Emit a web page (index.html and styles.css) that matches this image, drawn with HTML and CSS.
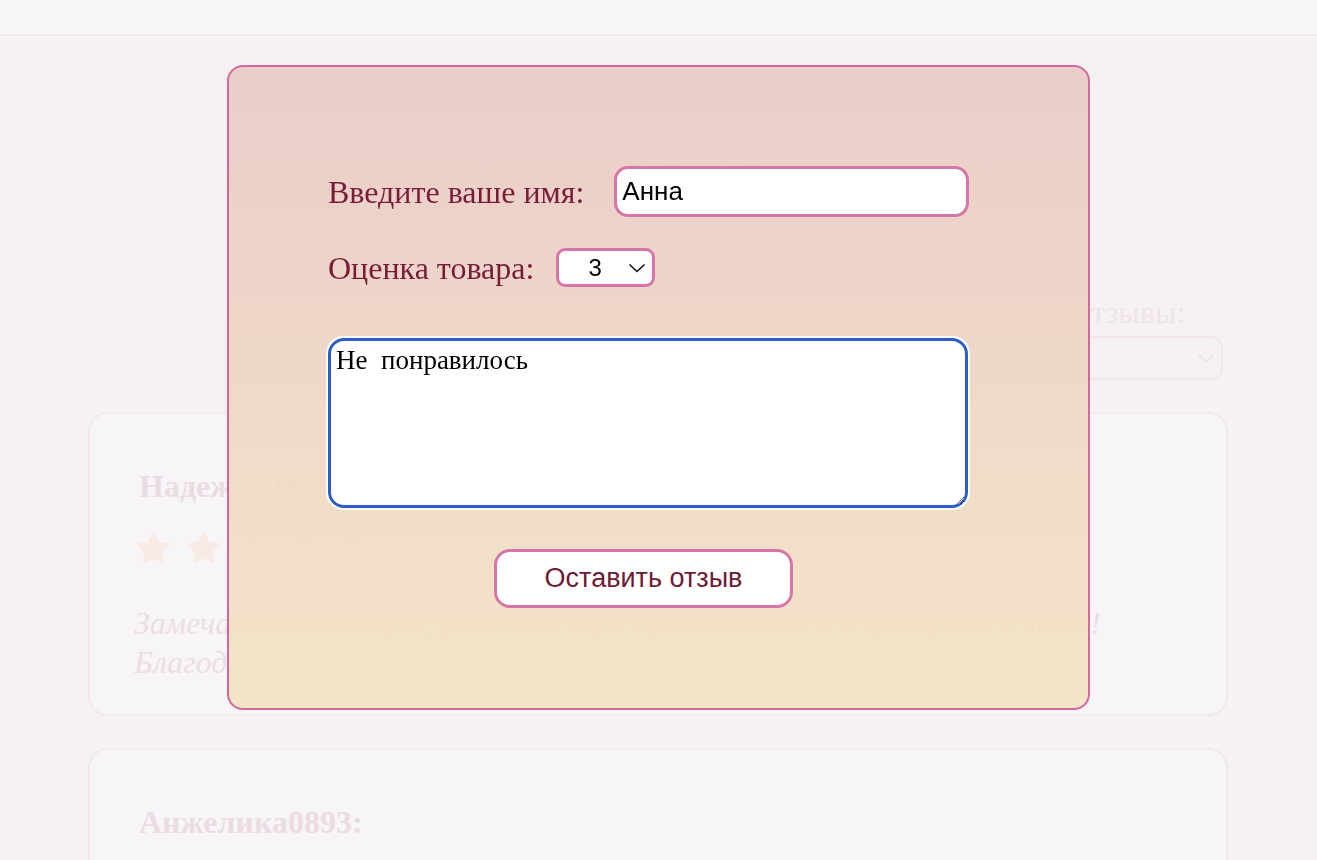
FILE: index.html
```html
<!DOCTYPE html>
<html lang="ru">
<head>
<meta charset="utf-8">
<title>Отзывы</title>
<link rel="stylesheet" href="styles.css">
</head>
<body>
<header class="topbar"></header>
<main class="page">
  <h1 class="page-title">Отзывы</h1>
  <div class="sort">
    <div class="sort-label">Сортировать отзывы:</div>
    <div class="sort-select">
      <span></span>
      <svg class="chev" width="18" height="10" viewBox="0 0 18 10"><path d="M1 1l8 8 8-8" fill="none" stroke="#f0e0e6" stroke-width="1.6"/></svg>
    </div>
  </div>
  <section class="reviews">
    <article class="card">
      <h3 class="card-name">Надежда Иванова:</h3>
      <div class="stars">
        <svg class="star" viewBox="0 0 24 24"><path class="fill" d="M12 1.5l3.2 6.6 7.2 1-5.2 5 1.3 7.2L12 17.9l-6.5 3.4 1.3-7.2-5.2-5 7.2-1z"/></svg>
        <svg class="star" viewBox="0 0 24 24"><path class="fill" d="M12 1.5l3.2 6.6 7.2 1-5.2 5 1.3 7.2L12 17.9l-6.5 3.4 1.3-7.2-5.2-5 7.2-1z"/></svg>
        <svg class="star" viewBox="0 0 24 24"><path class="line" d="M12 1.5l3.2 6.6 7.2 1-5.2 5 1.3 7.2L12 17.9l-6.5 3.4 1.3-7.2-5.2-5 7.2-1z"/></svg>
        <svg class="star" viewBox="0 0 24 24"><path class="line" d="M12 1.5l3.2 6.6 7.2 1-5.2 5 1.3 7.2L12 17.9l-6.5 3.4 1.3-7.2-5.2-5 7.2-1z"/></svg>
        <svg class="star" viewBox="0 0 24 24"><path class="line" d="M12 1.5l3.2 6.6 7.2 1-5.2 5 1.3 7.2L12 17.9l-6.5 3.4 1.3-7.2-5.2-5 7.2-1z"/></svg>
      </div>
      <p class="card-text">Замечательный сорт, розы быстро приживаются и цветут все лето! Благодарю за аккуратную доставку.</p>
    </article>
    <article class="card card-last">
      <h3 class="card-name">Анжелика0893:</h3>
    </article>
  </section>
</main>

<div class="modal">
  <form class="modal-form">
    <div class="row row-name">
      <label class="label label-name" for="name">Введите ваше имя:</label>
      <input id="name" class="name-input" type="text" value="Анна">
    </div>
    <div class="row row-rate">
      <span class="label label-rate">Оценка товара:</span>
      <div class="rate-select">
        <span class="rate-value">3</span>
        <svg class="rate-chev" width="18" height="10" viewBox="0 0 18 10"><path d="M1.5 1.5l7.5 7 7.5-7" fill="none" stroke="#111" stroke-width="1.6"/></svg>
      </div>
    </div>
    <textarea class="comment">Не  понравилось</textarea>
    <button type="button" class="submit">Оставить отзыв</button>
  </form>
</div>
<script src="script.js"></script>
</body>
</html>
```

FILE: styles.css
```css
* { box-sizing: border-box; }

html, body {
  margin: 0;
  padding: 0;
}

body {
  background: #f6f2f4;
  font-family: "Liberation Serif", "Times New Roman", serif;
  height: 860px;
  overflow: hidden;
}

.topbar {
  height: 36px;
  background: #f8f6f9;
  border-bottom: 2px solid #f2e7ed;
}

.page {
  display: flex;
  flex-direction: column;
  padding: 0 89px 0 88px;
}

.page-title {
  margin: 99px 0 0;
  font-size: 50px;
  font-style: italic;
  font-weight: normal;
  letter-spacing: 12px;
  line-height: 53px;
  text-align: center;
  color: #efe2e6;
}

.sort {
  align-self: flex-end;
  width: 328px;
  margin: 106px 5px 0 0;
  display: flex;
  flex-direction: column;
  gap: 6px;
}

.sort-label {
  font-size: 32px;
  color: #efe3e8;
  line-height: 36px;
}

.sort-select {
  height: 44px;
  border: 2px solid #f3e6eb;
  border-radius: 12px;
  display: flex;
  align-items: center;
  justify-content: flex-end;
  padding-right: 6px;
}

.reviews {
  display: flex;
  flex-direction: column;
  gap: 32px;
  margin-top: 32px;
}

.card {
  border: 2px solid #f4e6ec;
  border-radius: 20px;
  background: #f8f5f8;
  padding: 54px 49px 33px;
  height: 304px;
}

.card-last {
  height: 200px;
}

.card-name {
  margin: 0;
  font-size: 32px;
  font-weight: bold;
  line-height: 37px;
  color: #eadce2;
}

.stars {
  display: flex;
  gap: 17px;
  margin-top: 27px;
  margin-left: -2px;
}

.star {
  width: 33px;
  height: 33px;
  display: block;
}

.star .fill {
  fill: #f8ebe6;
  stroke: #f8ebe6;
  stroke-width: 2.4;
  stroke-linejoin: round;
}

.star .line {
  fill: none;
  stroke: #f3e9e4;
  stroke-width: 1;
  stroke-linejoin: round;
}

.card-text {
  margin: 39px 0 0 -5px;
  font-size: 32px;
  font-style: italic;
  line-height: 38.5px;
  color: #ecdde4;
}

/* modal */
.modal {
  position: fixed;
  top: 65px;
  left: 227px;
  width: 863px;
  height: 645px;
  border: 2px solid #d4679b;
  border-radius: 16px;
  background: linear-gradient(180deg, rgba(233, 202, 197, 0.93) 0%, rgba(243, 227, 196, 0.93) 100%);
  padding: 99px 0 0 99px;
}

.modal-form {
  width: 642px;
  display: flex;
  flex-direction: column;
}

.row {
  display: flex;
  align-items: center;
}

.label {
  font-size: 32px;
  color: #781c3a;
  line-height: 36px;
  white-space: nowrap;
  flex-shrink: 0;
}

.row-name { height: 51px; }
.label-name { margin-right: 30px; }

.name-input {
  flex-shrink: 0;
  width: 355px;
  height: 51px;
  border: 3px solid #d676a8;
  border-radius: 14px;
  background: #fff;
  font-family: "Liberation Sans", Arial, sans-serif;
  font-size: 26px;
  color: #000;
  padding: 0 5px;
  outline: none;
}

.row-rate {
  height: 39px;
  margin-top: 31px;
}

.label-rate { margin-right: 22px; }

.rate-select {
  flex-shrink: 0;
  width: 99px;
  height: 39px;
  border: 3px solid #d676a8;
  border-radius: 9px;
  background: #fff;
  display: flex;
  align-items: center;
  padding-left: 29px;
  font-family: "Liberation Sans", Arial, sans-serif;
  font-size: 24px;
  color: #000;
}

.rate-chev {
  margin-left: 26px;
  display: block;
}

.comment {
  margin-top: 51px;
  width: 640px;
  height: 170px;
  border: 3px solid #2b5fc7;
  border-radius: 16px;
  box-shadow: 0 0 0 2px #fff;
  background: #fff;
  font-family: "Liberation Serif", "Times New Roman", serif;
  font-size: 27px;
  color: #000;
  padding: 4px 5px;
  outline: none;
  resize: both;
  caret-color: #000;
}

.submit {
  margin: 41px 0 0 166px;
  align-self: flex-start;
  width: 299px;
  height: 59px;
  border: 3px solid #d676a8;
  border-radius: 16px;
  background: #fff;
  font-family: "Liberation Sans", Arial, sans-serif;
  font-size: 27px;
  color: #6d1a35;
  padding: 0;
}
```

FILE: script.js
```js
var t = document.querySelector('.comment');
t.focus();
t.setSelectionRange(t.value.length, t.value.length);
```
